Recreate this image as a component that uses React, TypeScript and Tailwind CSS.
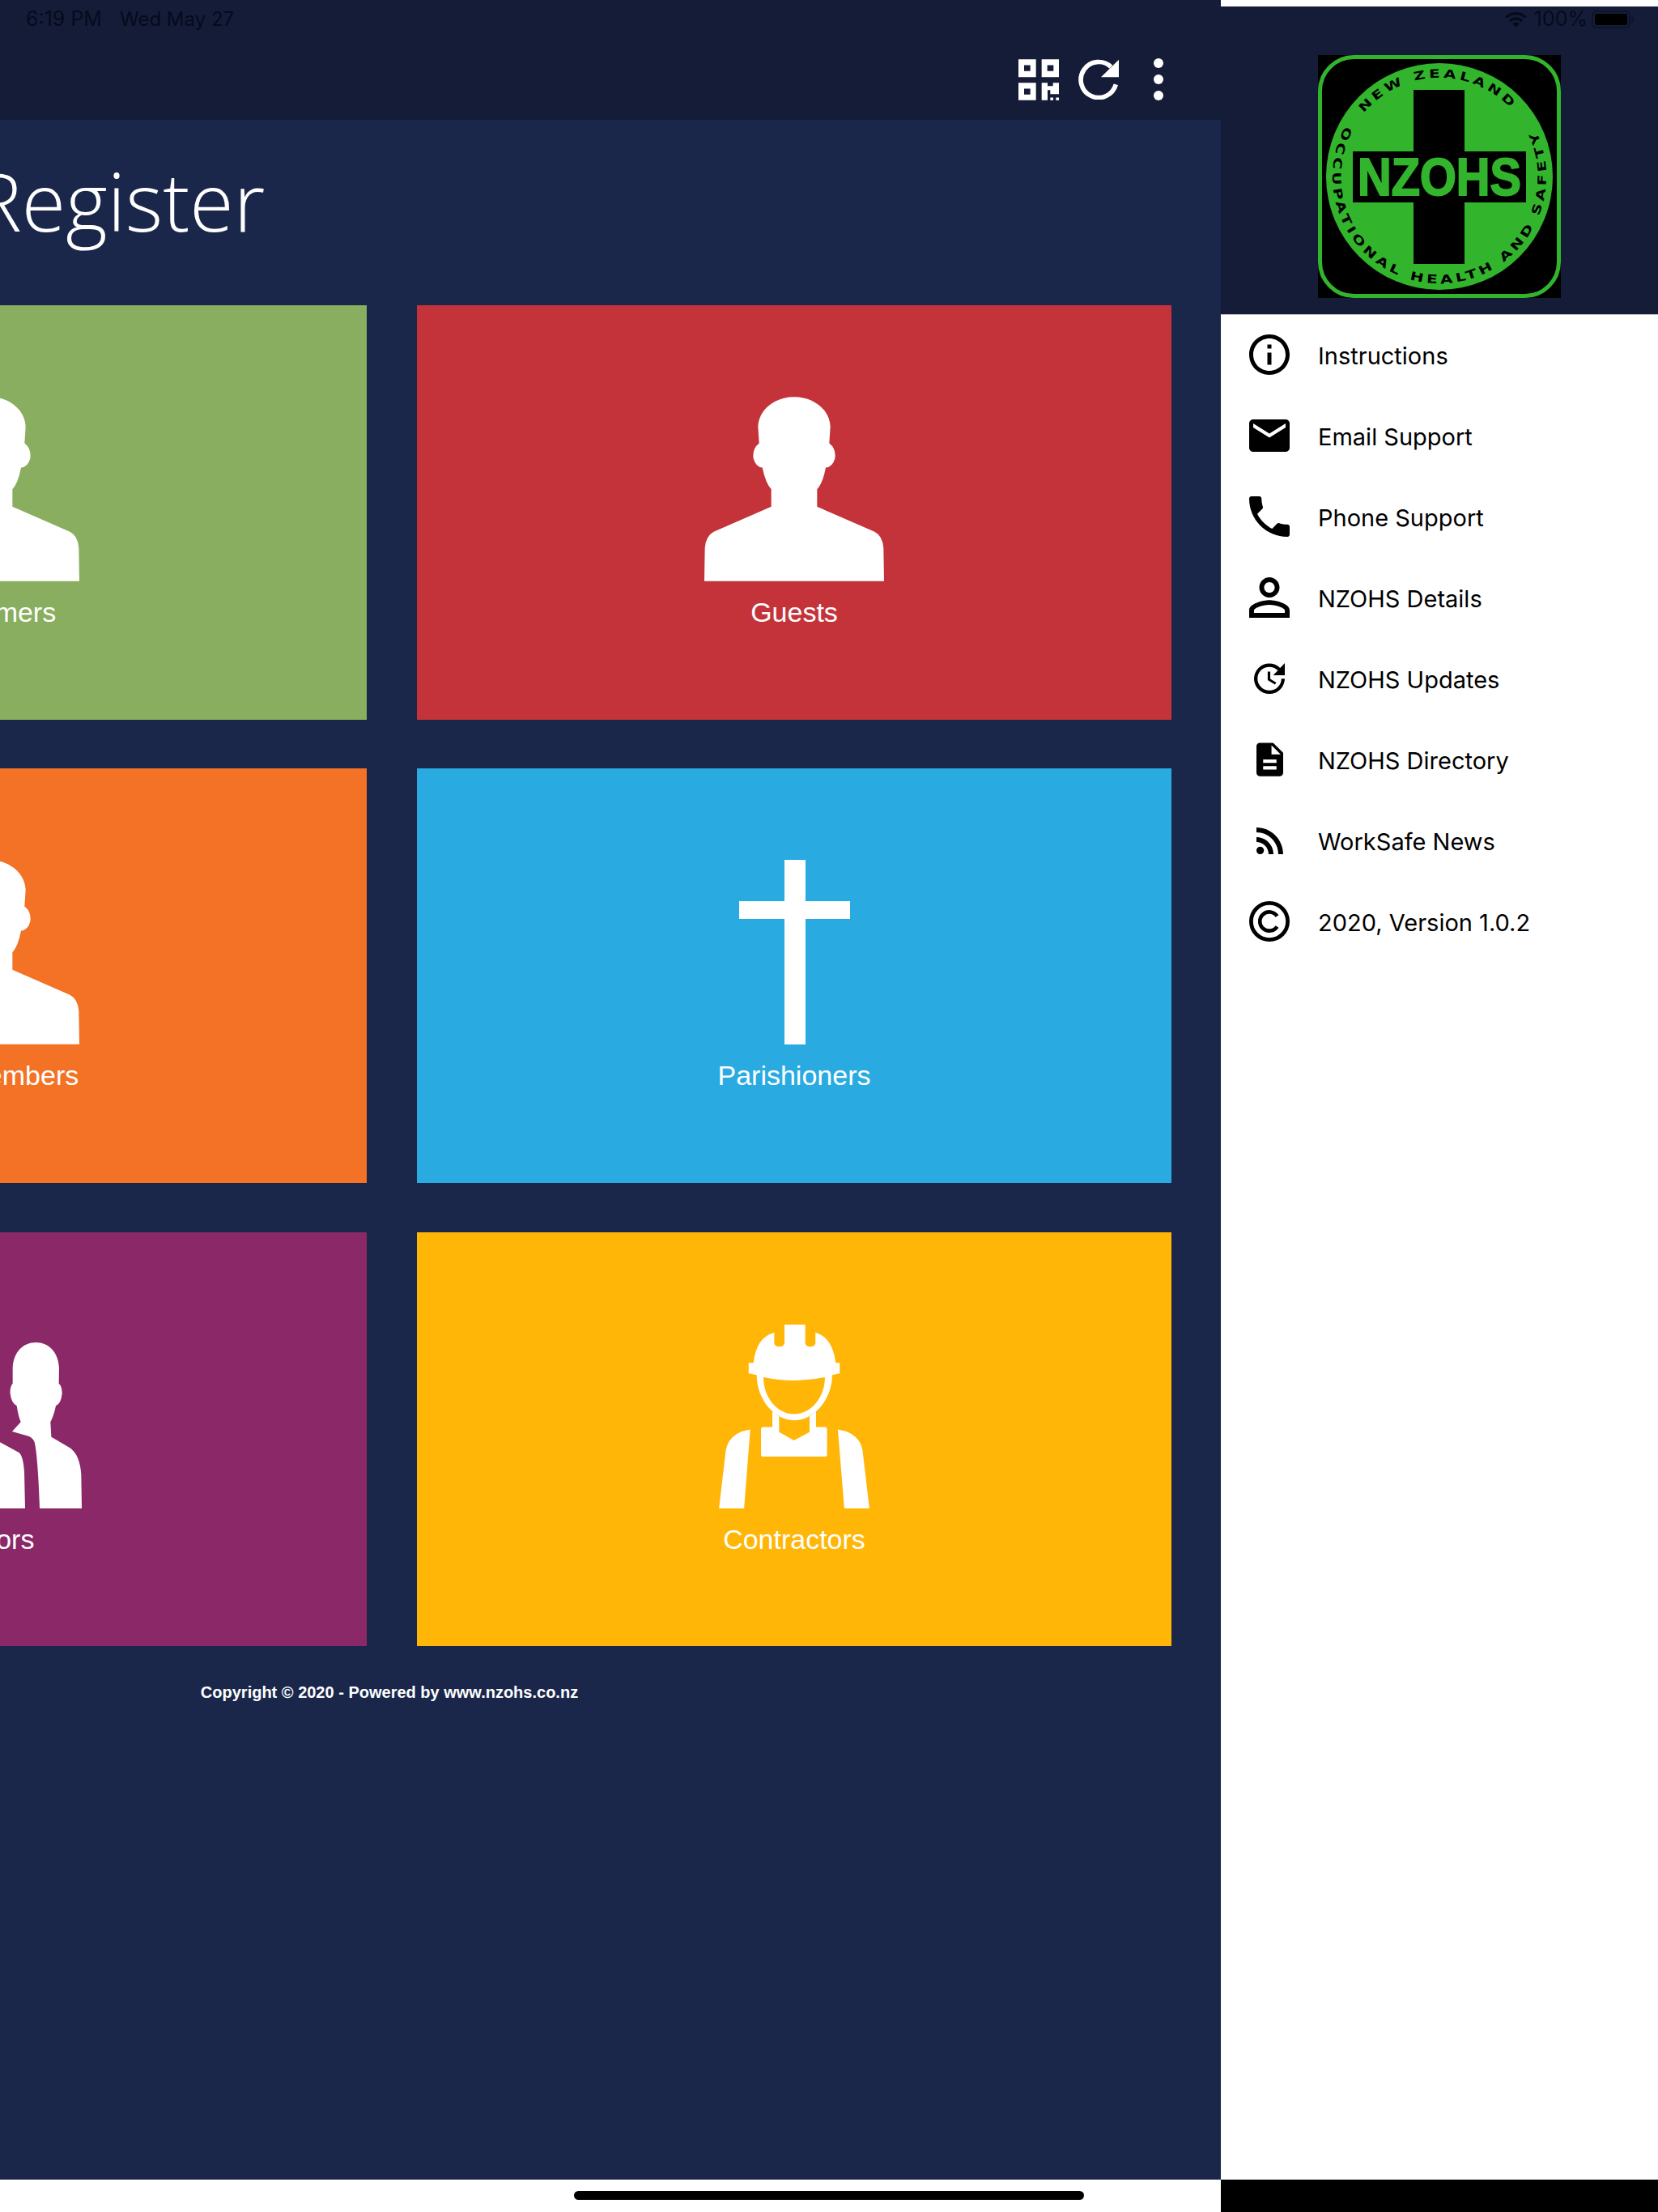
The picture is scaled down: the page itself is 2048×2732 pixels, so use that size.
import React from 'react';

const PERSON =
  'M147 773 L149 650 Q152 606 182 590 L395 497 L395 432 Q374 410 362 352 Q338 350 329 318 Q324 282 350 262 L346 200 C348 140 405 90 480 90 C555 90 612 140 614 200 L610 262 Q636 282 631 318 Q622 350 597 352 Q586 410 565 432 L565 497 L778 590 Q808 606 811 650 L813 773 Z';

function PersonIcon() {
  return (
    <svg viewBox="147 90 666 683" className="w-[222px] h-[228px] block" fill="#fff">
      <path d={PERSON} />
    </svg>
  );
}

function VisitorIcon() {
  return (
    <svg viewBox="-381 110 684 615" className="w-[228px] h-[205px] block" fill="#fff">
      <path d="M303 725 L301 600 Q296 525 258 500 L190 460 L187 405 Q200 380 207 345 Q226 338 230 300 Q230 272 218 262 L219 205 C216 145 180 110 133 110 C86 110 50 145 47 205 L47 262 Q36 275 38 300 Q42 335 62 345 Q68 385 77 405 L45 440 L100 456 Q122 462 128 480 Q140 530 147 725 Z" />
      <path d="M93 725 L90 590 Q86 530 70 518 L0 480 L-90 430 L-130 420 Q-150 405 -152 380 L-160 345 Q-185 335 -190 300 Q-188 275 -176 262 L-176 205 C-170 145 -130 110 -88 110 C-40 110 -6 145 -4 205 L-6 262 L-40 420 L-120 440 L-300 510 Q-375 540 -381 640 L-381 725 Z" />
    </svg>
  );
}

function CrossIcon() {
  return (
    <svg viewBox="0 0 137 228" className="w-[137px] h-[228px] block" fill="#fff">
      <rect x="56" y="0" width="26" height="228" />
      <rect x="0" y="51" width="137" height="22" />
    </svg>
  );
}

function WorkerIcon() {
  return (
    <svg viewBox="207 103 558 682" className="w-[186px] h-[227px] block" fill="#fff">
      <path
        fillRule="evenodd"
        d="M450 103 L527 103 L527 172 Q530 185 545 185 Q562 185 565 172 L565 132 Q628 150 640 245 L655 245 L655 284 L627 290 C627 380 560 458 486 458 C412 458 347 380 347 290 L317 284 L317 245 L335 245 Q345 150 412 132 L412 172 Q415 185 430 185 Q447 185 450 172 Z M372 298 C372 375 425 435 486 435 C547 435 600 375 600 298 Q486 322 372 298 Z"
      />
      <path d="M405 425 L430 445 L430 502 L485 533 L543 502 L543 445 L567 425 L567 483 L600 483 Q608 483 608 491 L608 585 Q608 593 600 593 L371 593 Q363 593 363 585 L363 491 Q363 483 371 483 L405 483 Z" />
      <path d="M323 492 L300 785 L207 785 L232 572 Q242 505 323 492 Z" />
      <path d="M648 492 L672 785 L765 785 L740 572 Q730 505 648 492 Z" />
    </svg>
  );
}

const tiles = [
  { label: 'Customers', bg: 'bg-[#8aae5f]', icon: <PersonIcon /> },
  { label: 'Guests', bg: 'bg-[#c4333a]', icon: <PersonIcon /> },
  { label: 'Staff Members', bg: 'bg-[#f37226]', icon: <PersonIcon /> },
  { label: 'Parishioners', bg: 'bg-[#29abe2]', icon: <CrossIcon /> },
  { label: 'Visitors', bg: 'bg-[#8b2867]', icon: <VisitorIcon /> },
  { label: 'Contractors', bg: 'bg-[#ffb607]', icon: <WorkerIcon /> },
];

const COPYRIGHT = (
  <svg viewBox="0 0 50 50" className="w-[50px] h-[50px]" fill="none" stroke="#000">
    <circle cx="25" cy="25" r="22.6" strokeWidth="4.8" />
    <path d="M34.5 18.6 A11.6 11.6 0 1 0 34.5 31.4" strokeWidth="4.6" />
  </svg>
);

const menu = [
  {
    label: 'Instructions',
    icon: (
      <svg viewBox="2 2 20 20" className="w-[50px] h-[50px]">
        <path d="M11 7h2v2h-2zm0 4h2v6h-2zm1-9C6.48 2 2 6.48 2 12s4.48 10 10 10 10-4.48 10-10S17.52 2 12 2zm0 18c-4.41 0-8-3.59-8-8s3.59-8 8-8 8 3.59 8 8-3.59 8-8 8z" />
      </svg>
    ),
  },
  {
    label: 'Email Support',
    icon: (
      <svg viewBox="2 4 20 16" className="w-[50px] h-[40px]">
        <path d="M20 4H4c-1.1 0-1.99.9-1.99 2L2 18c0 1.1.9 2 2 2h16c1.1 0 2-.9 2-2V6c0-1.1-.9-2-2-2zm0 4l-8 5-8-5V6l8 5 8-5v2z" />
      </svg>
    ),
  },
  {
    label: 'Phone Support',
    icon: (
      <svg viewBox="3 3 18 18" className="w-[50px] h-[50px]">
        <path d="M6.62 10.79c1.44 2.83 3.76 5.14 6.59 6.59l2.2-2.2c.27-.27.67-.36 1.02-.24 1.12.37 2.33.57 3.57.57.55 0 1 .45 1 1V20c0 .55-.45 1-1 1-9.39 0-17-7.61-17-17 0-.55.45-1 1-1h3.5c.55 0 1 .45 1 1 0 1.25.2 2.45.57 3.57.11.35.03.74-.25 1.02l-2.2 2.2z" />
      </svg>
    ),
  },
  {
    label: 'NZOHS Details',
    icon: (
      <svg viewBox="4 4 16 16" className="w-[50px] h-[50px]">
        <path d="M12 5.9c1.16 0 2.1.94 2.1 2.1s-.94 2.1-2.1 2.1S9.9 9.16 9.9 8s.94-2.1 2.1-2.1m0 9c2.97 0 6.1 1.46 6.1 2.1v1.1H5.9V17c0-.64 3.13-2.1 6.1-2.1M12 4C9.79 4 8 5.79 8 8s1.79 4 4 4 4-1.79 4-4-1.79-4-4-4zm0 9c-2.67 0-8 1.34-8 4v3h16v-3c0-2.66-5.33-4-8-4z" />
      </svg>
    ),
  },
  {
    label: 'NZOHS Updates',
    icon: (
      <svg viewBox="3 3 18 18" className="w-[38px] h-[38px]">
        <path d="M21 10.12h-6.78l2.74-2.82c-2.73-2.7-7.15-2.8-9.88-.1-2.73 2.71-2.73 7.08 0 9.79s7.15 2.71 9.88 0C18.32 15.65 19 14.08 19 12.1h2c0 1.98-.88 4.55-2.64 6.29-3.51 3.48-9.21 3.48-12.72 0-3.5-3.47-3.53-9.11-.02-12.58s9.14-3.47 12.65 0L21 3v7.12zM12.5 8v4.25l3.5 2.08-.72 1.21L11 13V8h1.5z" />
      </svg>
    ),
  },
  {
    label: 'NZOHS Directory',
    icon: (
      <svg viewBox="4 2 16 20" className="w-[33px] h-[42px]">
        <path d="M14 2H6c-1.1 0-1.99.9-1.99 2L4 20c0 1.1.89 2 1.99 2H18c1.1 0 2-.9 2-2V8l-6-6zm2 16H8v-2h8v2zm0-4H8v-2h8v2zm-3-5V3.5L18.5 9H13z" />
      </svg>
    ),
  },
  {
    label: 'WorkSafe News',
    icon: (
      <svg viewBox="4 4.44 15.56 15.56" className="w-[33px] h-[33px]">
        <circle cx="6.18" cy="17.82" r="2.18" />
        <path d="M4 4.44v2.83c7.03 0 12.73 5.7 12.73 12.73h2.83c0-8.59-6.97-15.56-15.56-15.56zm0 5.66v2.83c3.9 0 7.07 3.17 7.07 7.07h2.83c0-5.47-4.43-9.9-9.9-9.9z" />
      </svg>
    ),
  },
  { label: '2020, Version 1.0.2', icon: COPYRIGHT },
];

function Logo() {
  return (
    <svg viewBox="0 0 300 300" className="w-[300px] h-[300px] block">
      <rect width="300" height="300" fill="#000" />
      <rect x="2.5" y="2.5" width="295" height="295" rx="42" fill="none" stroke="#32b52c" strokeWidth="5" />
      <circle cx="150" cy="150" r="140" fill="#32b52c" />
      <rect x="118" y="43" width="63" height="215" fill="#000" />
      <rect x="43" y="119" width="214" height="63" fill="#000" />
      <text
        x="49"
        y="172.5"
        textLength="202"
        lengthAdjust="spacingAndGlyphs"
        fontSize="64"
        fontWeight="700"
        fontFamily="'Liberation Sans', sans-serif"
        fill="#32b52c"
        stroke="#32b52c"
        strokeWidth="2"
      >
        NZOHS
      </text>
      <defs>
        <path id="ring-top" d="M56.5 71.6 A122 122 0 0 1 243.5 71.6" />
        <path id="ring-bottom" d="M33.5 88 A132 132 0 1 0 266.5 88" />
      </defs>
      <text fontSize="14.5" fontWeight="700" letterSpacing="3" fontFamily="'DejaVu Sans', sans-serif" fill="#000">
        <textPath href="#ring-top" textLength="208" lengthAdjust="spacingAndGlyphs">
          NEW ZEALAND
        </textPath>
      </text>
      <text fontSize="14.5" fontWeight="700" letterSpacing="3" fontFamily="'DejaVu Sans', sans-serif" fill="#000">
        <textPath href="#ring-bottom" textLength="540" lengthAdjust="spacingAndGlyphs">
          OCCUPATIONAL HEALTH AND SAFETY
        </textPath>
      </text>
    </svg>
  );
}

function App() {
  return (
    <div className="w-[2048px] h-[2732px] flex overflow-hidden bg-white font-['Inter',sans-serif]">
      {/* Main page, pushed left by the open drawer */}
      <div className="w-[1508px] h-full flex flex-col overflow-hidden">
        <header className="h-[148px] bg-[#141c38] flex flex-col shrink-0">
          <div className="h-[48px] pl-[32px] flex items-center gap-[22px] text-[#060a1c]">
            <span className="text-[25px]">6:19 PM</span>
            <span className="text-[24px]">Wed May 27</span>
          </div>
          <div className="h-[100px] flex items-center justify-end pr-[71px]">
            <svg viewBox="174 216 150 152" className="w-[50px] h-[51px]" fill="#fff">
              <path
                fillRule="evenodd"
                d="M174 216h65v66h-65zM195 238v22h23v-22zM260 216h64v66h-64zM281 238v22h23v-22zM174 303h65v65h-65zM195 325v22h23v-22z"
              />
              <path d="M260 303h22v12h20v-12h22v42h-32v-15h-10v38h-22z" />
              <rect x="292" y="358" width="11" height="10" />
              <rect x="313" y="358" width="11" height="10" />
            </svg>
            <svg viewBox="396 218 150 150" className="w-[50px] h-[50px] ml-[24px]" fill="#fff">
              <path d="M535 312 A66 66 0 1 1 517 247" fill="none" stroke="#fff" strokeWidth="17" />
              <path d="M546 220 V285 H480 Z" />
            </svg>
            <div className="ml-[43px] flex flex-col gap-[8px]">
              <div className="w-[12px] h-[12px] rounded-full bg-white"></div>
              <div className="w-[12px] h-[12px] rounded-full bg-white"></div>
              <div className="w-[12px] h-[12px] rounded-full bg-white"></div>
            </div>
          </div>
        </header>

        <main className="flex-1 bg-[#1a274b] text-white font-['Liberation_Sans',sans-serif]">
          <h1 className="h-[229px] -ml-[32px] pt-[33px] text-[99px] leading-[134px] font-light font-['Open_Sans',sans-serif]">
            Register
          </h1>
          <div className="w-[1926px] -ml-[479px] grid grid-cols-2 gap-x-[62px] gap-y-[60.75px]">
            {tiles.map((tile) => (
              <div key={tile.label} className={`h-[511.5px] flex flex-col items-center ${tile.bg}`}>
                <div className="h-[341px] flex items-end">{tile.icon}</div>
                <div className="mt-[18px] text-[34px] leading-[40px]">{tile.label}</div>
              </div>
            ))}
          </div>
          <p className="w-[1926px] -ml-[482px] mt-[45px] text-center text-[20px] leading-[24px] font-bold">
            Copyright © 2020 - Powered by www.nzohs.co.nz
          </p>
        </main>

        <div className="h-[40px] shrink-0 bg-white pl-[709px] pt-[14px]">
          <div className="w-[630px] h-[11px] rounded-full bg-black"></div>
        </div>
      </div>

      {/* Drawer */}
      <aside className="w-[540px] h-full flex flex-col pt-[8px] bg-white">
        <div className="relative h-[380px] shrink-0 bg-[#141c38] shadow-[0_1px_0_#c4c4c4]">
          <div className="h-[32px] flex items-center justify-end pr-[30px] text-[25px] text-[#060a1c]">
            <svg viewBox="0 0 27 20" className="w-[27px] h-[20px] mr-[9px]" fill="none" stroke="#060a1c" strokeWidth="3.2">
              <path d="M1.6 7.4 A17 17 0 0 1 25.4 7.4" />
              <path d="M6 12 A10.6 10.6 0 0 1 21 12" />
              <path d="M13.5 19.5 L9.2 15.4 A6 6 0 0 1 17.8 15.4 Z" fill="#060a1c" stroke="none" />
            </svg>
            <span>100%</span>
            <div className="ml-[5px] w-[48px] h-[22px] rounded-[6px] border-2 border-[#0e1429] p-[2px]">
              <div className="w-full h-full rounded-[3px] bg-black"></div>
            </div>
            <div className="ml-[1px] w-[3px] h-[8px] rounded-r-full bg-[#0e1429]"></div>
          </div>
          <div className="mt-[28px] flex justify-center">
            <Logo />
          </div>
        </div>

        <nav className="flex-1">
          {menu.map((item) => (
            <div key={item.label} className="h-[100px] flex items-center pl-[35px]">
              <div className="w-[50px] h-[50px] flex items-center justify-center">{item.icon}</div>
              <span className="ml-[35px] mt-[3px] text-[29px] text-black">{item.label}</span>
            </div>
          ))}
        </nav>

        <div className="h-[40px] shrink-0 bg-black"></div>
      </aside>
    </div>
  );
}

export default App;
